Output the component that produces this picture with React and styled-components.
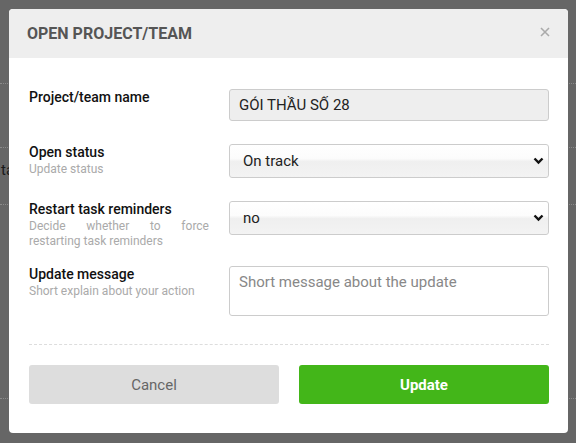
import React from "react";
import styled, { createGlobalStyle } from "styled-components";

const GlobalStyle = createGlobalStyle`
  body {
    margin: 0;
    background: #666;
    font-family: Roboto, "Liberation Sans", Arial, sans-serif;
  }
`;

function Chevron() {
  return (
    <svg width="11" height="8" viewBox="0 0 11 8">
      <polyline
        points="1.5,1.5 5.5,5.5 9.5,1.5"
        fill="none"
        stroke="#111"
        strokeWidth="2.4"
      />
    </svg>
  );
}

function CloseIcon() {
  return (
    <svg width="10" height="10" viewBox="0 0 10 10">
      <path d="M1 1 L9 9 M9 1 L1 9" stroke="#aaa" strokeWidth="1.6" />
    </svg>
  );
}

function App() {
  return (
    <Page>
      <GlobalStyle />
      <BgList>
        <BgRow $h={84} />
        <BgRow $h={64} />
        <BgRow $h={57}>
          <BgText>ta</BgText>
        </BgRow>
        <BgRow $h={194} />
      </BgList>

      <Modal>
        <Header>
          <Title>OPEN PROJECT/TEAM</Title>
          <CloseBtn>
            <CloseIcon />
          </CloseBtn>
        </Header>
        <Body>
          <FormRow $mb={23}>
            <LabelCol>
              <Label>Project/team name</Label>
            </LabelCol>
            <TextInput defaultValue="GÓI THẦU SỐ 28" readOnly />
          </FormRow>

          <FormRow $mb={23}>
            <LabelCol>
              <Label>Open status</Label>
              <Hint>Update status</Hint>
            </LabelCol>
            <SelectWrap>
              <Select defaultValue="on">
                <option value="on">On track</option>
              </Select>
              <Arrow>
                <Chevron />
              </Arrow>
            </SelectWrap>
          </FormRow>

          <FormRow $mb={18}>
            <LabelCol>
              <Label>Restart task reminders</Label>
              <Hint>Decide whether to force restarting task reminders</Hint>
            </LabelCol>
            <SelectWrap>
              <Select defaultValue="no">
                <option value="no">no</option>
              </Select>
              <Arrow>
                <Chevron />
              </Arrow>
            </SelectWrap>
          </FormRow>

          <FormRow $mb={0}>
            <LabelCol>
              <Label>Update message</Label>
              <Hint>Short explain about your action</Hint>
            </LabelCol>
            <TextArea placeholder="Short message about the update" />
          </FormRow>

          <Divider />

          <Footer>
            <Button>Cancel</Button>
            <Button $primary>Update</Button>
          </Footer>
        </Body>
      </Modal>
    </Page>
  );
}

export default App;

const Page = styled.div`
  position: relative;
  width: 576px;
  height: 443px;
  overflow: hidden;
  background: #666;
`;

const BgList = styled.div`
  display: flex;
  flex-direction: column;
`;

const BgRow = styled.div`
  height: ${(p) => p.$h}px;
  box-sizing: border-box;
  border-bottom: 1px dotted #8a8a8a;
  padding-top: 14px;
`;

const BgText = styled.div`
  font-size: 15px;
  line-height: 17px;
  color: #1a1a1a;
  padding-left: 1px;
`;

const Modal = styled.div`
  position: absolute;
  top: 9px;
  left: 9px;
  width: 559px;
  background: #fff;
  border-radius: 4px;
  overflow: hidden;
`;

const Header = styled.div`
  height: 49px;
  display: flex;
  align-items: center;
  justify-content: space-between;
  padding: 0 18px 0 18px;
  background: #eee;
`;

const Title = styled.div`
  font-size: 16px;
  font-weight: 700;
  color: #555;
`;

const CloseBtn = styled.div`
  display: flex;
  margin-top: -4px;
`;

const Body = styled.div`
  padding: 31px 19px 29px 20px;
`;

const FormRow = styled.div`
  display: grid;
  grid-template-columns: 180px 320px;
  column-gap: 20px;
  align-items: start;
  margin-bottom: ${(p) => p.$mb}px;
`;

const LabelCol = styled.div`
  display: flex;
  flex-direction: column;
`;

const Label = styled.div`
  font-size: 14px;
  font-weight: 500;
  line-height: 17px;
  color: #111;
`;

const Hint = styled.div`
  margin-top: 1px;
  font-size: 12px;
  line-height: 14.5px;
  color: #aaa;
  text-align: justify;
`;

const TextInput = styled.input`
  box-sizing: border-box;
  width: 320px;
  height: 32px;
  padding: 0 9px;
  border: 1px solid #ccc;
  border-radius: 3px;
  background: #eee;
  font-family: inherit;
  font-size: 15px;
  color: #222;
  outline: none;
`;

const SelectWrap = styled.div`
  position: relative;
  width: 320px;
`;

const Select = styled.select`
  box-sizing: border-box;
  width: 100%;
  height: 34px;
  padding: 0 13px;
  appearance: none;
  border: 1px solid #ccc;
  border-radius: 3px;
  background: linear-gradient(#fff 0%, #fcfcfc 42%, #efefef 52%, #f3f3f3 100%);
  font-family: inherit;
  font-size: 15px;
  color: #222;
  outline: none;
`;

const Arrow = styled.span`
  position: absolute;
  right: 5px;
  top: 50%;
  transform: translateY(-50%);
  display: flex;
  pointer-events: none;
`;

const TextArea = styled.textarea`
  box-sizing: border-box;
  width: 320px;
  height: 50px;
  padding: 6px 9px;
  border: 1px solid #ccc;
  border-radius: 3px;
  background: #fff;
  font-family: inherit;
  font-size: 15px;
  line-height: 19px;
  color: #222;
  resize: none;
  outline: none;

  &::placeholder {
    color: #888;
  }
`;

const Divider = styled.div`
  margin: 28px 0 20px;
  border-top: 1px dashed #ddd;
`;

const Footer = styled.div`
  display: grid;
  grid-template-columns: 1fr 1fr;
  column-gap: 20px;
`;

const Button = styled.button`
  height: 39px;
  border: none;
  border-radius: 3px;
  background: ${(p) => (p.$primary ? "#43b619" : "#ddd")};
  color: ${(p) => (p.$primary ? "#fff" : "#666")};
  font-family: inherit;
  font-size: 15px;
  font-weight: ${(p) => (p.$primary ? 700 : 400)};
  cursor: pointer;
`;
